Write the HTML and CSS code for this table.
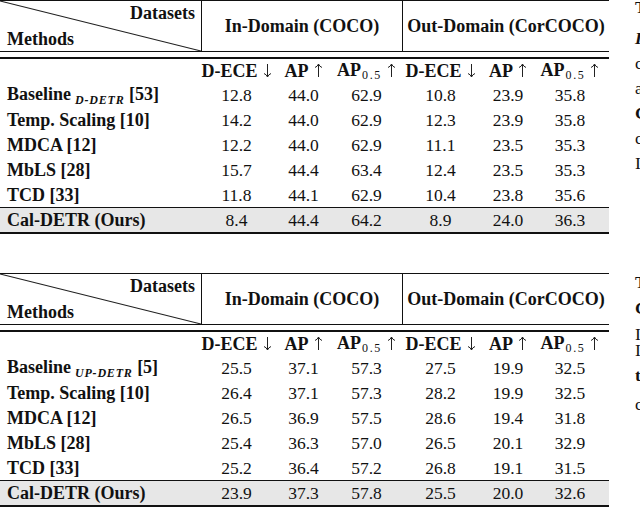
FILE: index.html
```html
<!DOCTYPE html>
<html>
<head>
<meta charset="utf-8">
<link rel="stylesheet" href="styles.css">
</head>
<body>
<div class="page">
  <div class="tables">
    <div class="tbl">
      <div class="head">
        <div class="diag-cell">
          <svg class="diag" width="201" height="50" viewBox="0 0 201 50"><line x1="0" y1="0" x2="201" y2="50" stroke="#222" stroke-width="1.1"/></svg>
          <div class="ds">Datasets</div>
          <div class="mt">Methods</div>
        </div>
        <div class="group">In-Domain (COCO)</div>
        <div class="group">Out-Domain (CorCOCO)</div>
      </div>
      <div class="row sub">
        <div class="cell name"></div>
        <div class="cell"><b>D-ECE</b><svg class="ar" width="9" height="15" viewBox="0 0 9 15"><path d="M4.5 1V14M1 10.5Q3.5 11.5 4.5 14Q5.5 11.5 8 10.5" fill="none" stroke="#222" stroke-width="1"/></svg></div>
        <div class="cell"><b>AP</b><svg class="ar" width="9" height="15" viewBox="0 0 9 15"><path d="M4.5 14V1M1 4.5Q3.5 3.5 4.5 1Q5.5 3.5 8 4.5" fill="none" stroke="#222" stroke-width="1"/></svg></div>
        <div class="cell c4"><b>AP</b><span class="s05">0.5</span><svg class="ar" width="9" height="15" viewBox="0 0 9 15"><path d="M4.5 14V1M1 4.5Q3.5 3.5 4.5 1Q5.5 3.5 8 4.5" fill="none" stroke="#222" stroke-width="1"/></svg></div>
        <div class="cell"><b>D-ECE</b><svg class="ar" width="9" height="15" viewBox="0 0 9 15"><path d="M4.5 1V14M1 10.5Q3.5 11.5 4.5 14Q5.5 11.5 8 10.5" fill="none" stroke="#222" stroke-width="1"/></svg></div>
        <div class="cell"><b>AP</b><svg class="ar" width="9" height="15" viewBox="0 0 9 15"><path d="M4.5 14V1M1 4.5Q3.5 3.5 4.5 1Q5.5 3.5 8 4.5" fill="none" stroke="#222" stroke-width="1"/></svg></div>
        <div class="cell c7"><b>AP</b><span class="s05">0.5</span><svg class="ar" width="9" height="15" viewBox="0 0 9 15"><path d="M4.5 14V1M1 4.5Q3.5 3.5 4.5 1Q5.5 3.5 8 4.5" fill="none" stroke="#222" stroke-width="1"/></svg></div>
      </div>
      <div class="row">
        <div class="cell name">Baseline<span class="sb">D-DETR</span>&nbsp;[53]</div>
        <div class="cell">12.8</div><div class="cell">44.0</div><div class="cell c4">62.9</div>
        <div class="cell">10.8</div><div class="cell">23.9</div><div class="cell c7">35.8</div>
      </div>
      <div class="row">
        <div class="cell name">Temp. Scaling [10]</div>
        <div class="cell">14.2</div><div class="cell">44.0</div><div class="cell c4">62.9</div>
        <div class="cell">12.3</div><div class="cell">23.9</div><div class="cell c7">35.8</div>
      </div>
      <div class="row">
        <div class="cell name">MDCA [12]</div>
        <div class="cell">12.2</div><div class="cell">44.0</div><div class="cell c4">62.9</div>
        <div class="cell">11.1</div><div class="cell">23.5</div><div class="cell c7">35.3</div>
      </div>
      <div class="row">
        <div class="cell name">MbLS [28]</div>
        <div class="cell">15.7</div><div class="cell">44.4</div><div class="cell c4">63.4</div>
        <div class="cell">12.4</div><div class="cell">23.5</div><div class="cell c7">35.3</div>
      </div>
      <div class="row">
        <div class="cell name">TCD [33]</div>
        <div class="cell">11.8</div><div class="cell">44.1</div><div class="cell c4">62.9</div>
        <div class="cell">10.4</div><div class="cell">23.8</div><div class="cell c7">35.6</div>
      </div>
      <div class="row ours">
        <div class="cell name">Cal-DETR (Ours)</div>
        <div class="cell">8.4</div><div class="cell">44.4</div><div class="cell c4">64.2</div>
        <div class="cell">8.9</div><div class="cell">24.0</div><div class="cell c7">36.3</div>
      </div>
    </div>

    <div class="tbl">
      <div class="head">
        <div class="diag-cell">
          <svg class="diag" width="201" height="50" viewBox="0 0 201 50"><line x1="0" y1="0" x2="201" y2="50" stroke="#222" stroke-width="1.1"/></svg>
          <div class="ds">Datasets</div>
          <div class="mt">Methods</div>
        </div>
        <div class="group">In-Domain (COCO)</div>
        <div class="group">Out-Domain (CorCOCO)</div>
      </div>
      <div class="row sub">
        <div class="cell name"></div>
        <div class="cell"><b>D-ECE</b><svg class="ar" width="9" height="15" viewBox="0 0 9 15"><path d="M4.5 1V14M1 10.5Q3.5 11.5 4.5 14Q5.5 11.5 8 10.5" fill="none" stroke="#222" stroke-width="1"/></svg></div>
        <div class="cell"><b>AP</b><svg class="ar" width="9" height="15" viewBox="0 0 9 15"><path d="M4.5 14V1M1 4.5Q3.5 3.5 4.5 1Q5.5 3.5 8 4.5" fill="none" stroke="#222" stroke-width="1"/></svg></div>
        <div class="cell c4"><b>AP</b><span class="s05">0.5</span><svg class="ar" width="9" height="15" viewBox="0 0 9 15"><path d="M4.5 14V1M1 4.5Q3.5 3.5 4.5 1Q5.5 3.5 8 4.5" fill="none" stroke="#222" stroke-width="1"/></svg></div>
        <div class="cell"><b>D-ECE</b><svg class="ar" width="9" height="15" viewBox="0 0 9 15"><path d="M4.5 1V14M1 10.5Q3.5 11.5 4.5 14Q5.5 11.5 8 10.5" fill="none" stroke="#222" stroke-width="1"/></svg></div>
        <div class="cell"><b>AP</b><svg class="ar" width="9" height="15" viewBox="0 0 9 15"><path d="M4.5 14V1M1 4.5Q3.5 3.5 4.5 1Q5.5 3.5 8 4.5" fill="none" stroke="#222" stroke-width="1"/></svg></div>
        <div class="cell c7"><b>AP</b><span class="s05">0.5</span><svg class="ar" width="9" height="15" viewBox="0 0 9 15"><path d="M4.5 14V1M1 4.5Q3.5 3.5 4.5 1Q5.5 3.5 8 4.5" fill="none" stroke="#222" stroke-width="1"/></svg></div>
      </div>
      <div class="row">
        <div class="cell name">Baseline<span class="sb">UP-DETR</span>&nbsp;[5]</div>
        <div class="cell">25.5</div><div class="cell">37.1</div><div class="cell c4">57.3</div>
        <div class="cell">27.5</div><div class="cell">19.9</div><div class="cell c7">32.5</div>
      </div>
      <div class="row">
        <div class="cell name">Temp. Scaling [10]</div>
        <div class="cell">26.4</div><div class="cell">37.1</div><div class="cell c4">57.3</div>
        <div class="cell">28.2</div><div class="cell">19.9</div><div class="cell c7">32.5</div>
      </div>
      <div class="row">
        <div class="cell name">MDCA [12]</div>
        <div class="cell">26.5</div><div class="cell">36.9</div><div class="cell c4">57.5</div>
        <div class="cell">28.6</div><div class="cell">19.4</div><div class="cell c7">31.8</div>
      </div>
      <div class="row">
        <div class="cell name">MbLS [28]</div>
        <div class="cell">25.4</div><div class="cell">36.3</div><div class="cell c4">57.0</div>
        <div class="cell">26.5</div><div class="cell">20.1</div><div class="cell c7">32.9</div>
      </div>
      <div class="row">
        <div class="cell name">TCD [33]</div>
        <div class="cell">25.2</div><div class="cell">36.4</div><div class="cell c4">57.2</div>
        <div class="cell">26.8</div><div class="cell">19.1</div><div class="cell c7">31.5</div>
      </div>
      <div class="row ours">
        <div class="cell name">Cal-DETR (Ours)</div>
        <div class="cell">23.9</div><div class="cell">37.3</div><div class="cell c4">57.8</div>
        <div class="cell">25.5</div><div class="cell">20.0</div><div class="cell c7">32.6</div>
      </div>
    </div>
  </div>

  <div class="side">
    <div class="ln bold">Table</div>
    <div class="ln bold ital">In</div>
    <div class="ln">cal</div>
    <div class="ln">and</div>
    <div class="ln bold">Cal</div>
    <div class="ln">cor</div>
    <div class="ln">In</div>
    <div class="ln bold">Table</div>
    <div class="ln bold">Cal</div>
    <div class="ln">In</div>
    <div class="ln">In</div>
    <div class="ln bold">the</div>
    <div class="ln">cor</div>
  </div>
</div>
</body>
</html>
```

FILE: styles.css
```css
* {
  box-sizing: border-box;
  margin: 0;
  padding: 0;
}

html, body {
  background: #ffffff;
}

body {
  width: 640px;
  height: 507px;
  overflow: hidden;
  font-family: "Liberation Serif", "Times New Roman", serif;
  font-size: 17.5px;
  line-height: 20px;
  color: #111111;
}

b {
  font-size: 18px;
}

.page {
  display: flex;
  gap: 26px;
}

.tables {
  width: 609px;
  flex: none;
  display: flex;
  flex-direction: column;
  gap: 39px;
}

.head {
  display: grid;
  grid-template-columns: 201px 201px 207px;
  height: 52px;
  border-top: 1px solid #111;
  border-bottom: 1px solid #111;
}

.diag-cell {
  position: relative;
  display: flex;
  flex-direction: column;
  justify-content: space-between;
  padding: 2px 6px 2px 7px;
  font-weight: bold;
  font-size: 18px;
}

.diag {
  position: absolute;
  left: 0;
  top: 0;
}

.ds {
  text-align: right;
}

.group {
  display: flex;
  align-items: center;
  justify-content: center;
  border-left: 1px solid #111;
  font-weight: bold;
  font-size: 18px;
  white-space: nowrap;
}

.row {
  display: grid;
  grid-template-columns: 201px 71px 63px 67px 77px 58px 72px;
  height: 25px;
  align-items: center;
}

.sub {
  margin-top: 5px;
  border-top: 2px solid #111;
}

.ours {
  height: 27px;
  background: #e7e7e7;
  border-top: 1px solid #111;
  border-bottom: 2px solid #111;
}

.cell {
  display: flex;
  justify-content: center;
  align-items: baseline;
  white-space: nowrap;
}

.c4 {
  padding-right: 4px;
}

.c7 {
  padding-right: 6px;
}

.name {
  justify-content: flex-start;
  padding-left: 7px;
  font-weight: bold;
  font-size: 18px;
}

.ar {
  flex: none;
  margin-left: 5px;
  align-self: center;
  position: relative;
  top: 0px;
}

.sb {
  font-size: 12px;
  font-style: italic;
  font-weight: bold;
  letter-spacing: 0.8px;
  margin-left: 4px;
  position: relative;
  top: 4px;
}

.s05 {
  font-weight: normal;
  font-size: 12px;
  letter-spacing: 1.6px;
  position: relative;
  top: 3px;
  margin-left: 1px;
}

.side {
  flex: none;
  width: 60px;
  display: grid;
  grid-template-rows: 31px 25px 25px 25px 25px 25px 119px 26px 26px 16px 25px 29px 24px;
  margin-top: -5px;
  line-height: 24px;
}

.ln {
  white-space: nowrap;
}

.bold {
  font-weight: bold;
}

.ital {
  font-style: italic;
}
```
